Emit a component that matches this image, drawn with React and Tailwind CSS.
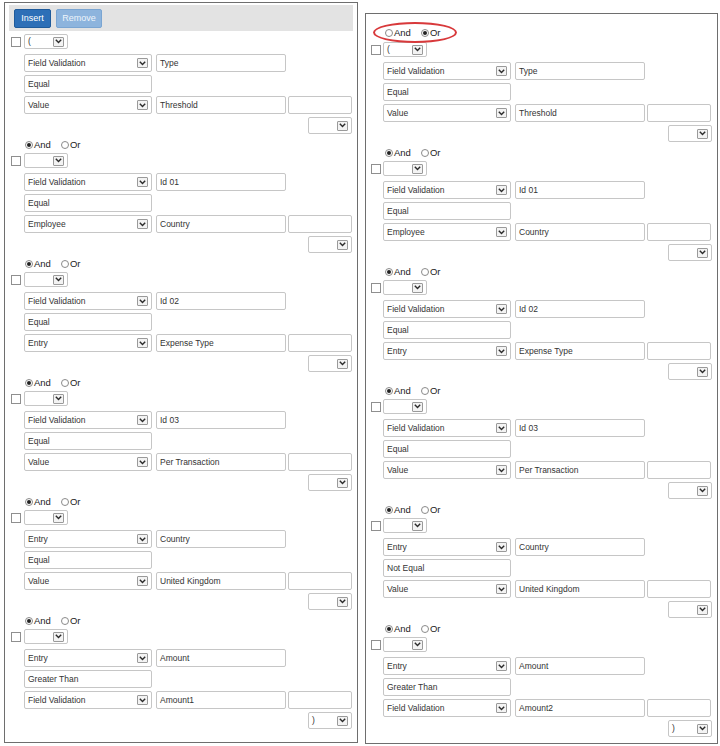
import React from "react";

const FONT = { fontFamily: '"Liberation Sans", Arial, sans-serif' };

const leftGroups = [
  { logic: null, paren: "(", rows: [["Field Validation", "Type"], ["Equal"], ["Value", "Threshold"]], close: "" },
  { logic: "and", paren: "", rows: [["Field Validation", "Id 01"], ["Equal"], ["Employee", "Country"]], close: "" },
  { logic: "and", paren: "", rows: [["Field Validation", "Id 02"], ["Equal"], ["Entry", "Expense Type"]], close: "" },
  { logic: "and", paren: "", rows: [["Field Validation", "Id 03"], ["Equal"], ["Value", "Per Transaction"]], close: "" },
  { logic: "and", paren: "", rows: [["Entry", "Country"], ["Equal"], ["Value", "United Kingdom"]], close: "" },
  { logic: "and", paren: "", rows: [["Entry", "Amount"], ["Greater Than"], ["Field Validation", "Amount1"]], close: ")" },
];

const rightGroups = [
  { logic: "or", circled: true, paren: "(", rows: [["Field Validation", "Type"], ["Equal"], ["Value", "Threshold"]], close: "" },
  { logic: "and", paren: "", rows: [["Field Validation", "Id 01"], ["Equal"], ["Employee", "Country"]], close: "" },
  { logic: "and", paren: "", rows: [["Field Validation", "Id 02"], ["Equal"], ["Entry", "Expense Type"]], close: "" },
  { logic: "and", paren: "", rows: [["Field Validation", "Id 03"], ["Equal"], ["Value", "Per Transaction"]], close: "" },
  { logic: "and", paren: "", rows: [["Entry", "Country"], ["Not Equal"], ["Value", "United Kingdom"]], close: "" },
  { logic: "and", paren: "", rows: [["Entry", "Amount"], ["Greater Than"], ["Field Validation", "Amount2"]], close: ")" },
];

function Arrow() {
  return (
    <div className="w-[11px] h-[10px] border border-[#9a9a9a] bg-[#f3f3f3] rounded-[1px] flex items-center justify-center shrink-0">
      <svg width="7" height="5" viewBox="0 0 7 5">
        <path d="M0.8 0.8 L3.5 3.6 L6.2 0.8" fill="none" stroke="#2b2b2b" strokeWidth="1.4" />
      </svg>
    </div>
  );
}

function Select({ value, w, h = "h-[18px]" }) {
  return (
    <div className={`${w} ${h} border border-[#c6c6c6] rounded-[2px] bg-white flex items-center justify-between pl-[3px] pr-[3px] shrink-0`}>
      <span className="text-[8.5px] text-[#333] leading-none">{value}</span>
      <Arrow />
    </div>
  );
}

function Input({ value, w }) {
  return (
    <div className={`${w} h-[18px] border border-[#c6c6c6] rounded-[2px] bg-white flex items-center pl-[3px] shrink-0`}>
      <span className="text-[8.5px] text-[#333] leading-none">{value}</span>
    </div>
  );
}

function Radio({ checked }) {
  return (
    <div className="w-[8px] h-[8px] rounded-full border border-[#8a8a8a] bg-white flex items-center justify-center">
      {checked && <div className="w-[4px] h-[4px] rounded-full bg-[#222]" />}
    </div>
  );
}

function AndOr({ logic, circled }) {
  return (
    <div className={`relative h-[13px] flex items-center pl-[14px] ${circled ? "mb-[3px]" : "mb-[2px]"}`}>
      <Radio checked={logic === "and"} />
      <span className="ml-[1px] text-[9.5px] text-[#222] leading-none">And</span>
      <div className="ml-[10px]">
        <Radio checked={logic === "or"} />
      </div>
      <span className="ml-[1px] text-[9.5px] text-[#222] leading-none">Or</span>
      {circled && (
        <div className="absolute left-[2px] top-[-4px] w-[84px] h-[21px] rounded-[50%] border-2 border-[#d8393b]" />
      )}
    </div>
  );
}

function Group({ g, first, tight }) {
  return (
    <div className={first ? "" : "mt-[4px]"}>
      {g.logic && <AndOr logic={g.logic} circled={g.circled} />}
      <div className="flex items-center h-[15px]">
        <div className="w-[10px] h-[10px] border border-[#8f8f8f] bg-white" />
        <div className={tight ? "ml-[2px]" : "ml-[3px]"}>
          <Select value={g.paren} w="w-[44px]" h="h-[15px]" />
        </div>
      </div>
      <div className={`${tight ? "pl-[12px]" : "pl-[13px]"} mt-[5px] flex flex-col gap-[3px] w-[341px]`}>
        <div className="flex gap-[4px]">
          <Select value={g.rows[0][0]} w="w-[128px]" />
          <Input value={g.rows[0][1]} w="w-[130px]" />
        </div>
        <div className="flex">
          <Input value={g.rows[1][0]} w="w-[128px]" />
        </div>
        <div className="flex">
          <Select value={g.rows[2][0]} w="w-[128px]" />
          <div className="ml-[4px]">
            <Input value={g.rows[2][1]} w="w-[130px]" />
          </div>
          <div className="ml-[2px]">
            <Input value="" w="w-[64px]" />
          </div>
        </div>
        <div className="flex justify-end">
          <Select value={g.close} w="w-[44px]" h="h-[17px]" />
        </div>
      </div>
    </div>
  );
}

export default function App() {
  return (
    <div className="w-[720px] h-[746px] bg-white flex items-start pl-[4px] pt-[2px] gap-[7px]" style={FONT}>
      <div className="w-[354px] h-[741px] border border-[#6e6e6e] px-[4px] pt-[2px]">
        <div className="h-[26px] bg-[#e3e3e3] flex items-center pl-[5px] gap-[5px]">
          <button className="w-[37px] h-[19px] bg-[#2d6fb7] border border-[#1f5b9b] rounded-[2px] text-white text-[9px] leading-none">
            Insert
          </button>
          <button className="w-[46px] h-[19px] bg-[#8db4dd] border border-[#7aa5d2] rounded-[2px] text-[#eef4fb] text-[9px] leading-none">
            Remove
          </button>
        </div>
        <div className="mt-[3px] pl-[2px]">
          {leftGroups.map((g, i) => (
            <Group key={i} g={g} first={i === 0} />
          ))}
        </div>
      </div>
      <div className="mt-[11px] w-[353px] h-[731px] border border-[#6e6e6e] pl-[5px] pt-[12px]">
        {rightGroups.map((g, i) => (
          <Group key={i} g={g} first={i === 0} tight />
        ))}
      </div>
    </div>
  );
}
